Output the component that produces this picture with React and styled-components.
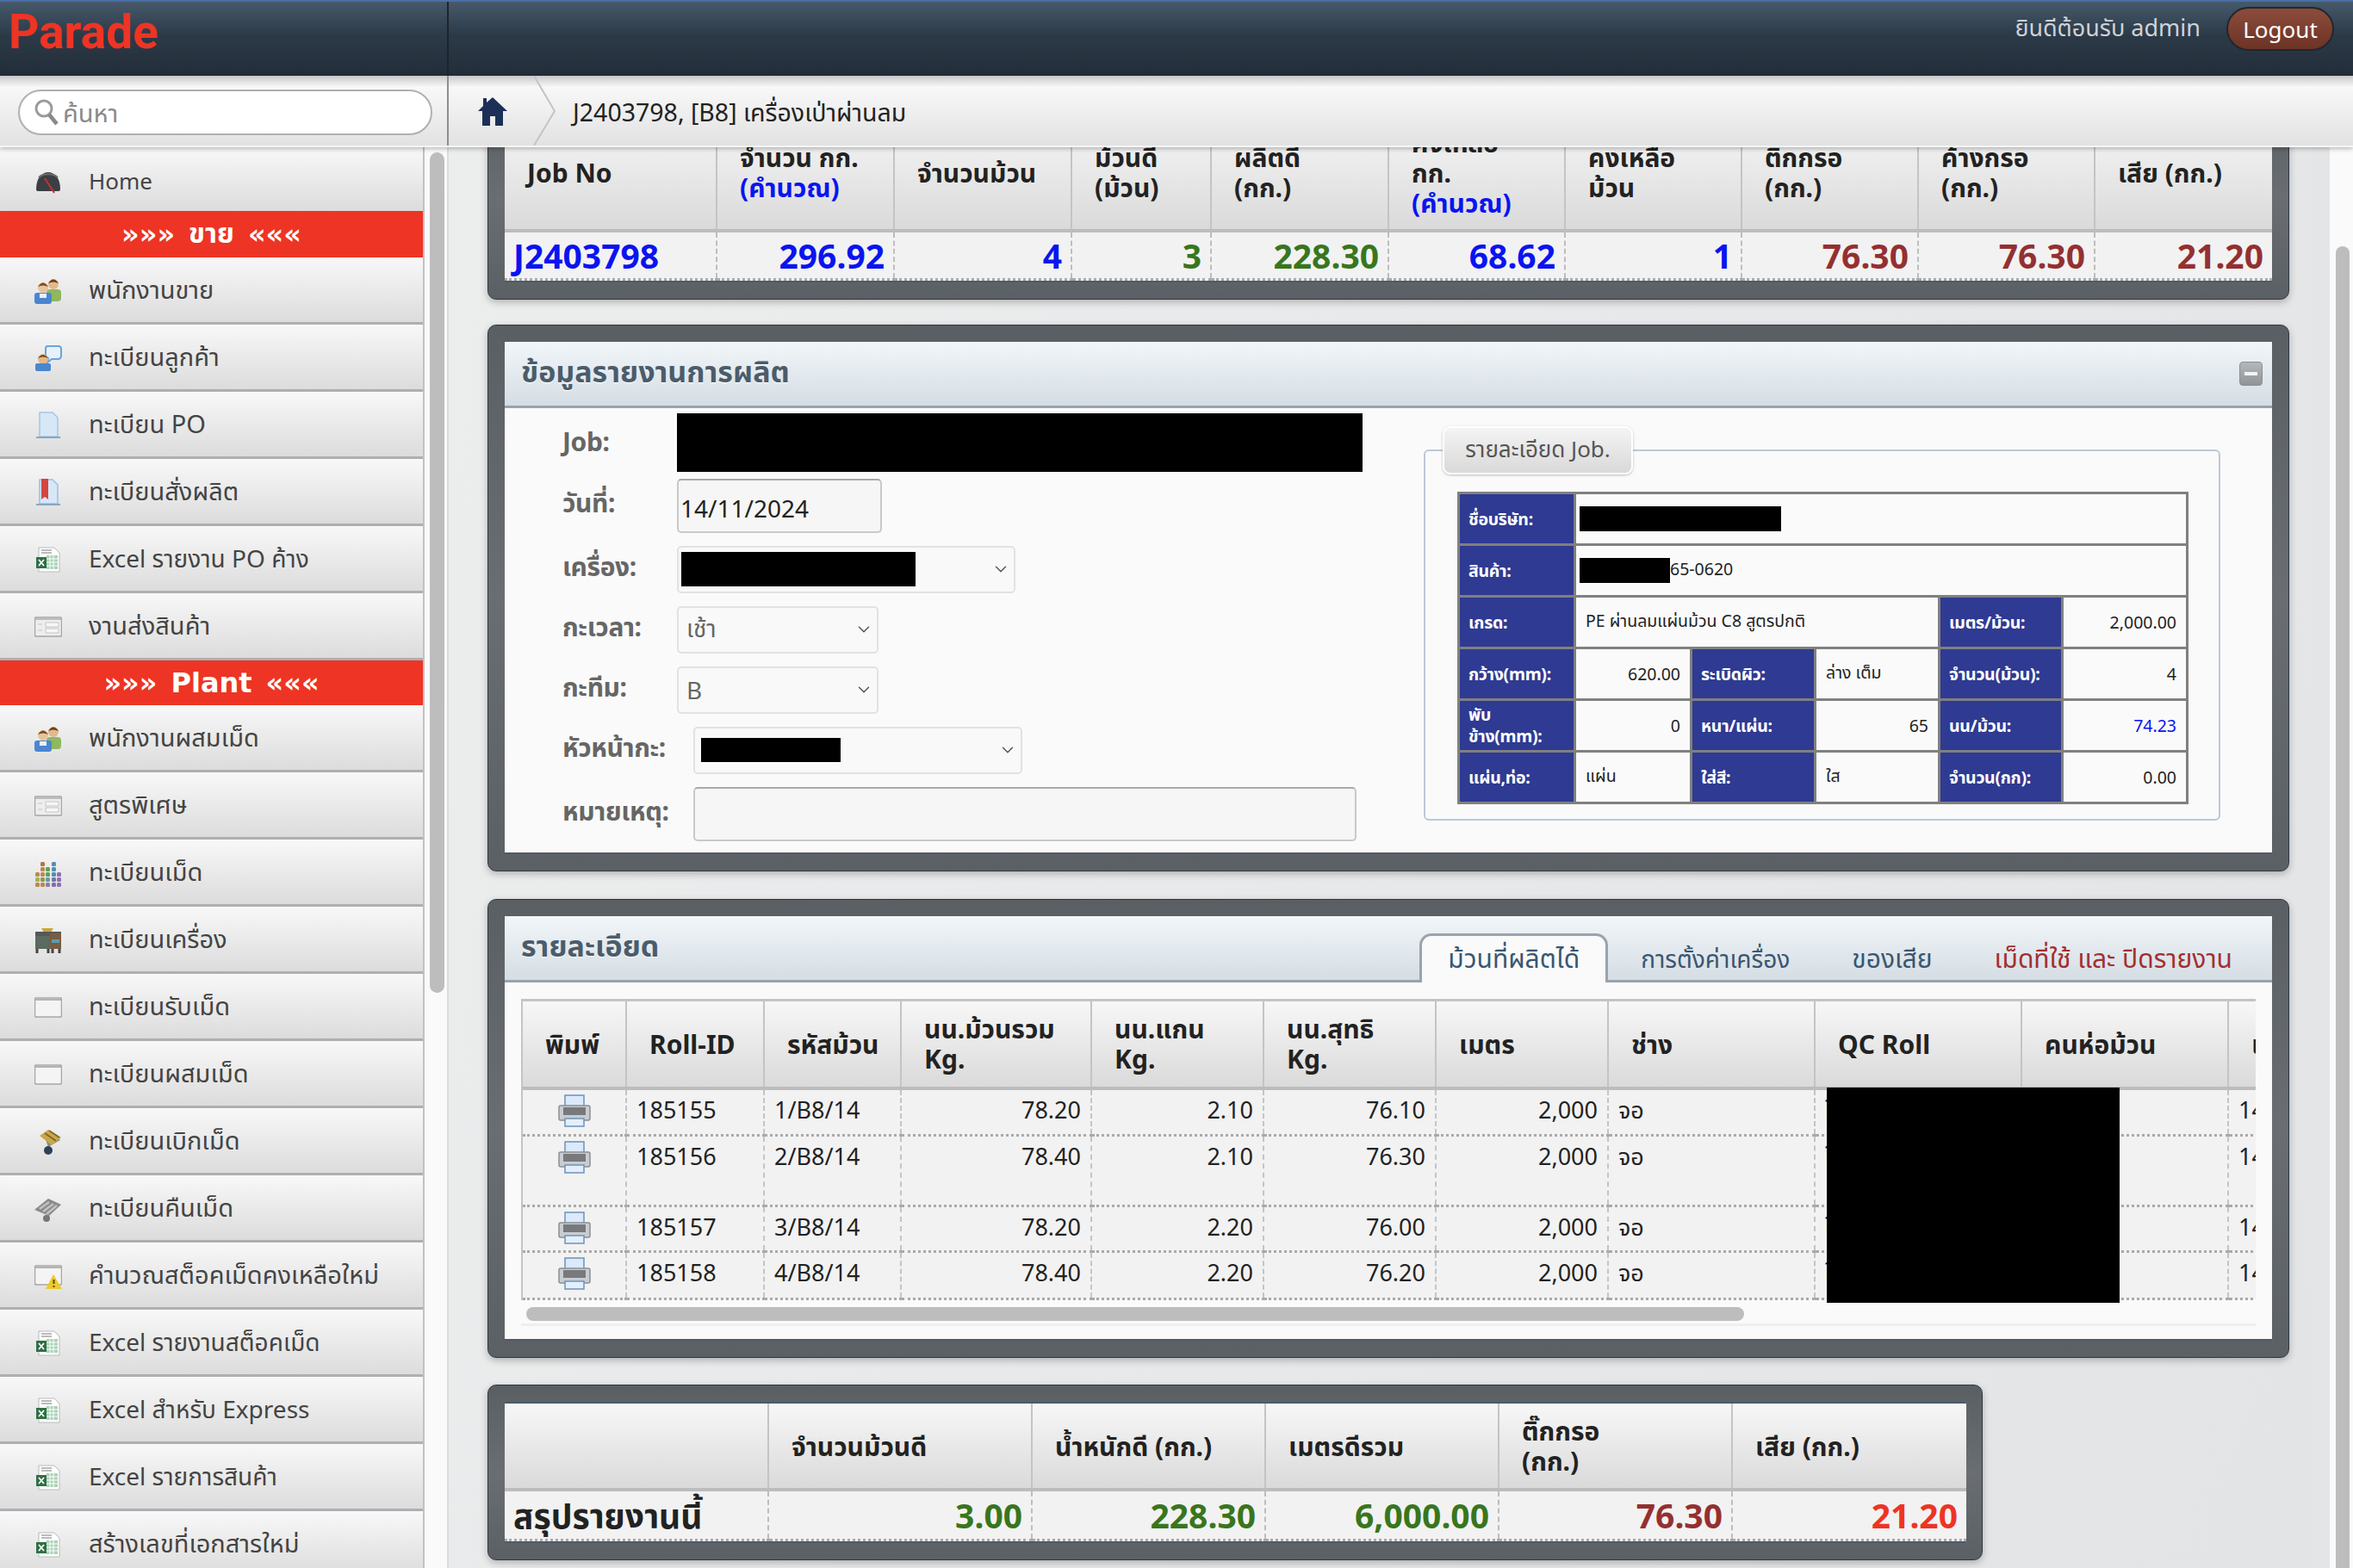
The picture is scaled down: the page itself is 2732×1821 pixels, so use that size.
import React from 'react';
import styled, { createGlobalStyle } from 'styled-components';
import { ChevronDown } from 'lucide-react';

const FONT = '"Noto Sans", "Noto Sans Thai", Tahoma, "DejaVu Sans", sans-serif';

const GlobalStyle = createGlobalStyle`
  html, body {
    margin: 0;
    padding: 0;
    background: #e5e6e8;
    font-family: ${FONT};
  }
  * { box-sizing: border-box; }
`;

const Page = styled.div`
  width: 2732px;
  height: 1821px;
  display: flex;
  flex-direction: column;
  overflow: hidden;
  color: #222;
`;

const TopBar = styled.header`
  height: 88px;
  flex: none;
  display: flex;
  align-items: flex-start;
  border-top: 2px solid #4a6fa8;
  background: linear-gradient(#46596b, #2c3a48 45%, #222d38);
`;

const Logo = styled.div`
  width: 521px;
  height: 86px;
  padding: 5px 0 0 10px;
  border-right: 2px solid #1c242c;
  color: #ee3424;
  font: bold 55px/60px "Roboto", sans-serif;
`;

const TopRight = styled.div`
  flex: 1;
  display: flex;
  align-items: center;
  justify-content: flex-end;
  gap: 30px;
  padding: 6px 22px 0 0;
`;

const Welcome = styled.span`
  color: #cfd3d6;
  font-size: 27px;
`;

const LogoutButton = styled.button`
  width: 125px;
  height: 51px;
  border: 2px solid #20272e;
  border-radius: 26px;
  background: linear-gradient(#8c4c3b, #6c3325);
  color: #fff;
  font: 26px ${FONT};
  padding: 0;
`;

const SubBar = styled.div`
  height: 83px;
  flex: none;
  display: flex;
  background: linear-gradient(#c8c8c8, #f8f8f8 16%, #e2e2e2);
  border-bottom: 2px solid #f5f5f5;
  box-shadow: 0 2px 5px rgba(0, 0, 0, 0.25);
  position: relative;
  z-index: 2;
`;

const SearchCell = styled.div`
  width: 521px;
  flex: none;
  padding: 16px 17px 0 21px;
  border-right: 2px solid #8b8f93;
`;

const SearchBox = styled.label`
  height: 53px;
  display: flex;
  align-items: center;
  gap: 2px;
  padding: 0 16px;
  border: 2px solid #b0b0b0;
  border-radius: 27px;
  background: #fff;
`;

const SearchInput = styled.input`
  flex: 1;
  min-width: 0;
  border: 0;
  outline: 0;
  background: none;
  font: 29px ${FONT};
  &::placeholder { color: #8a8a8a; opacity: 1; }
`;

const Crumbs = styled.nav`
  flex: 1;
  display: flex;
  align-items: center;
  padding: 0 0 0 33px;
  font-size: 28.5px;
  color: #222;
`;

const CrumbText = styled.span`
  margin-top: 7px;
`;

const CrumbArrow = styled.svg`
  width: 28px;
  height: 81px;
  margin: 0 19px 0 28px;
  flex: none;
`;

const Body = styled.div`
  flex: 1;
  min-height: 0;
  display: flex;
`;

const Side = styled.aside`
  width: 521px;
  flex: none;
  display: flex;
  overflow: hidden;
  background: #fafafa;
  border-right: 2px solid #dcdcdc;
`;

const SideList = styled.div`
  width: 493px;
  flex: none;
  border-right: 2px solid #bfc2c5;
`;

const SideThumb = styled.div`
  width: 17px;
  height: 976px;
  margin: 6px 0 0 6px;
  border-radius: 9px;
  background: #bdbdbd;
`;

const SideItem = styled.a`
  height: ${(p) => (p.$first ? 74 : 78)}px;
  display: flex;
  align-items: center;
  gap: 31px;
  padding: 3px 0 0 40px;
  background: linear-gradient(#f8f8f8, #dcdcdc);
  border-bottom: ${(p) => (p.$first ? 0 : '3px solid #adb0b3')};
  color: #444;
  font-size: ${(p) => p.$size || 29}px;
  white-space: nowrap;
`;

const SideSection = styled.div`
  height: ${(p) => (p.$tall ? 54 : 52)}px;
  display: flex;
  align-items: center;
  justify-content: center;
  gap: 16px;
  background: #ee3424;
  color: #fff;
  font: bold 32px "DejaVu Sans", ${FONT};
  white-space: pre;
`;

const IconBox = styled.svg`
  width: 32px;
  height: 32px;
  flex: none;
`;

const Main = styled.main`
  flex: 1;
  min-width: 0;
  display: flex;
  overflow: hidden;
`;

const MainScroll = styled.div`
  flex: 1;
  min-width: 0;
  padding: 0 0 0 45px;
  background: linear-gradient(115deg, #eceded, #e3e4e6);
`;

const ScrollRail = styled.div`
  width: 47px;
  flex: none;
  display: flex;
  background: linear-gradient(90deg, #e4e5e7 0 20px, #fafafa 20px);
`;

const RailThumb = styled.div`
  width: 16px;
  margin: 115px 0 0 27px;
  border-radius: 8px 8px 0 0;
  background: #bdbdbd;
`;

const Panel = styled.section`
  width: ${(p) => p.$width}px;
  margin-top: ${(p) => p.$top}px;
  padding: 19px;
  border: 1px solid #2c3843;
  border-radius: 10px;
  background: linear-gradient(#5a5f64, #6a6e72 50%, #5b6065);
  box-shadow: 0 3px 8px rgba(0, 0, 0, 0.25);
`;

const PanelBody = styled.div`
  background: #fafafa;
  border-top: ${(p) => (p.$bar ? '2px solid #4a5a68' : 0)};
  border-bottom: 2px solid #4f5b66;
`;

const PanelHead = styled.div`
  height: 77px;
  display: flex;
  align-items: flex-end;
  justify-content: space-between;
  padding-left: 19px;
  border-bottom: 3px solid #9aa3ad;
  background: linear-gradient(#f1f6f9, #d5dde4);
`;

const PanelTitle = styled.h2`
  align-self: center;
  margin: 0;
  color: #4b5c6b;
  font-size: 34px;
  font-weight: bold;
  text-shadow: 0 1px 0 #fff;
`;

const MinButton = styled.button`
  width: 27px;
  height: 28px;
  align-self: center;
  margin-right: 11px;
  display: flex;
  align-items: center;
  justify-content: center;
  padding: 0;
  border: 1px solid #8a8f94;
  border-radius: 4px;
  background: linear-gradient(#b4b8bb, #8f9498);
  &::before {
    content: '';
    width: 15px;
    height: 4px;
    background: #f4f4f4;
  }
`;

const Tabs = styled.div`
  display: flex;
  align-items: flex-end;
  height: 57px;
  margin-bottom: -3px;
  padding-right: 46px;
`;

const Tab = styled.div`
  height: ${(p) => (p.$active ? 57 : 54)}px;
  padding: 4px ${(p) => (p.$active ? 30 : 0)}px 0;
  margin-left: ${(p) => p.$gap || 0}px;
  font-size: ${(p) => p.$size || 30}px;
  line-height: 44px;
  white-space: nowrap;
  color: ${(p) => (p.$red ? '#a32f2f' : '#3a5670')};
  background: ${(p) => (p.$active ? '#fafafa' : 'none')};
  border: ${(p) => (p.$active ? '3px solid #9aa3ad' : 0)};
  border-bottom: 0;
  border-radius: 14px 14px 0 0;
`;

const DataTable = styled.table`
  width: ${(p) => p.$width}px;
  table-layout: fixed;
  border-collapse: collapse;
  font-size: 27px;
`;

const Col = styled.col`
  width: ${(p) => p.$w}px;
`;

const HeadCell = styled.th`
  height: ${(p) => p.$h}px;
  padding: 0 8px 0 ${(p) => p.$pad ?? 26}px;
  text-align: left;
  vertical-align: middle;
  font-size: 30px;
  font-weight: bold;
  line-height: 35px;
  color: #222;
  background: linear-gradient(#f7f7f7, #dadada);
  border-right: 2px solid #c4c4c4;
  border-bottom: 4px solid #bcbcbc;
  white-space: nowrap;
  &:last-child { border-right: 0; }
`;

const BlueNote = styled.span`
  color: #0a14f0;
`;

const ValueCell = styled.td`
  height: ${(p) => p.$h}px;
  padding: 0 10px;
  text-align: ${(p) => p.$align || 'right'};
  font-size: 39px;
  font-weight: bold;
  line-height: 1;
  color: ${(p) => p.$color};
  background: #f2f2f2;
  border-right: 2px dashed #bdbdbd;
  border-bottom: 3px dotted #aaa;
  white-space: nowrap;
  &:last-child { border-right: 0; }
`;

const RollCell = styled.td`
  height: ${(p) => p.$h}px;
  padding: 5px 11px 0;
  vertical-align: top;
  text-align: ${(p) => p.$align || 'left'};
  font-size: 27px;
  line-height: 36px;
  color: #222;
  background: #f2f2f2;
  border-right: 2px dashed #c4c4c4;
  border-bottom: 3px dotted #aaa;
  white-space: nowrap;
`;

const FormArea = styled.div`
  display: flex;
  height: 516px;
`;

const FormColumn = styled.div`
  width: 1040px;
  flex: none;
  display: flex;
  flex-direction: column;
  gap: 15px;
  padding: 6px 0 0 67px;
`;

const FormRow = styled.div`
  height: ${(p) => p.$h}px;
  margin-top: ${(p) => p.$mt || 0}px;
  display: flex;
  align-items: center;
`;

const FieldLabel = styled.label`
  width: ${(p) => p.$w}px;
  flex: none;
  color: #666;
  font-size: 30px;
  font-weight: bold;
  letter-spacing: -0.4px;
  white-space: nowrap;
  margin-top: -3px;
`;

const Redact = styled.span`
  display: inline-block;
  vertical-align: middle;
  flex: none;
  width: ${(p) => p.$w}px;
  height: ${(p) => p.$h}px;
  background: #000;
`;

const DateInput = styled.input`
  width: 238px;
  height: 63px;
  padding: 6px 2px 0;
  border: 2px solid #c9c9c9;
  border-top-color: #a9a9a9;
  border-radius: 5px;
  background: #f6f6f6;
  color: #222;
  font: 28px ${FONT};
`;

const SelectBox = styled.div`
  width: ${(p) => p.$w}px;
  height: 55px;
  display: flex;
  align-items: center;
  justify-content: space-between;
  padding: 0 4px 0 ${(p) => p.$pad}px;
  border: 2px solid #e2e2e2;
  border-radius: 5px;
  background: #f9f9f9;
  color: #666;
  font-size: 28px;
`;

const Note = styled.textarea`
  width: 770px;
  height: 63px;
  resize: none;
  border: 2px solid #c9c9c9;
  border-top-color: #a9a9a9;
  border-radius: 5px;
  background: #f6f6f6;
`;

const JobBox = styled.fieldset`
  position: relative;
  width: 925px;
  height: 431px;
  margin: 48px 0 0 27px;
  padding: 47px 0 0 37px;
  border: 2px solid #bcc8d6;
  border-radius: 6px;
`;

const JobLegend = styled.div`
  position: absolute;
  top: -29px;
  left: 20px;
  width: 221px;
  height: 56px;
  display: flex;
  align-items: center;
  justify-content: center;
  border: 2px solid #fff;
  border-radius: 9px;
  background: linear-gradient(#f4f4f4, #d9d9d9);
  box-shadow: 0 1px 3px rgba(0, 0, 0, 0.25);
  color: #555;
  font-size: 26px;
`;

const JobTable = styled.table`
  width: 846px;
  table-layout: fixed;
  border-collapse: collapse;
  font-size: 19.5px;
`;

const JobKey = styled.td`
  height: 60px;
  padding: 0 8px 0 10px;
  background: #2f3a92;
  color: #fff;
  font-weight: bold;
  line-height: 25px;
  letter-spacing: -0.3px;
  white-space: nowrap;
  border: 3px solid #808080;
`;

const JobVal = styled.td`
  padding: 0 ${(p) => (p.$tight ? 4 : 11)}px;
  text-align: ${(p) => p.$align || 'left'};
  color: ${(p) => p.$color || '#222'};
  background: #fafafa;
  border: 3px solid #808080;
  white-space: nowrap;
`;

const RollArea = styled.div`
  position: relative;
  padding: 19px 19px 15px 19px;
`;

const RollClip = styled.div`
  overflow: hidden;
  border-top: 3px solid #c4c4c4;
  border-left: 2px solid #c4c4c4;
`;

const RollScroll = styled.div`
  height: 22px;
  margin-top: 8px;
  border-bottom: 3px solid #efefef;
`;

const RollThumb = styled.div`
  width: 1414px;
  height: 16px;
  margin-left: 6px;
  border-radius: 8px;
  background: #bdbdbd;
`;

const RollMask = styled.div`
  position: absolute;
  left: 1535px;
  top: 122px;
  width: 340px;
  height: 250px;
  background: #000;
`;

const PrinterSvg = styled.svg`
  width: 38px;
  height: 38px;
  display: block;
  margin: 0 auto;
`;

const Shapes = {
  gauge: (
    <>
      <path d="M2 26 C2 12 9 6 16 6 C23 6 30 12 30 26 Q30 28 27 28 H5 Q2 28 2 26Z" fill="#3b3f45" />
      <path d="M5 12 C10 7 22 7 27 12" stroke="#6a6f75" strokeWidth="2" fill="none" />
      <path d="M12 13 L23 30" stroke="#c8342a" strokeWidth="2" />
    </>
  ),
  users: (
    <>
      <circle cx="22" cy="8" r="6" fill="#e2b98a" />
      <path d="M16 7 Q22 -2 28 7 Q22 4 16 7Z" fill="#6a3f20" />
      <rect x="14" y="14" width="17" height="14" rx="4" fill="#8fb85f" />
      <circle cx="10" cy="12" r="6" fill="#e8c49a" />
      <path d="M4 11 Q10 2 16 11 Q10 8 4 11Z" fill="#7a4a20" />
      <rect x="0" y="18" width="20" height="13" rx="3" fill="#4a86d0" />
      <rect x="6" y="19" width="8" height="5" fill="#e8f0fa" />
    </>
  ),
  talk: (
    <>
      <path d="M15 2 H28 Q31 2 31 6 V13 Q31 17 27 17 H20 L15 21 L16 16 Q13 15 13 12 V6 Q13 2 15 2Z" fill="#e6f1fb" stroke="#6aa3dc" strokeWidth="2" />
      <circle cx="10" cy="17" r="6" fill="#e2b98a" />
      <path d="M4 16 Q10 8 16 16 Q10 13 4 16Z" fill="#7a4a20" />
      <rect x="1" y="22" width="18" height="9" rx="2" fill="#4a86d0" />
    </>
  ),
  doc: (
    <>
      <path d="M6 1 H21 L27 7 V29 H6Z" fill="#d6e8f7" stroke="#a8c6e2" strokeWidth="1.5" />
      <path d="M2 30 H30" stroke="#8ba5bf" strokeWidth="2" />
    </>
  ),
  book: (
    <>
      <path d="M6 1 H21 L27 7 V29 H6Z" fill="#d6e8f7" stroke="#9dbfe0" strokeWidth="1.5" />
      <path d="M8 0 H16 V24 L12 21 L8 24Z" fill="#d8453e" />
      <path d="M2 30 H30" stroke="#8ba5bf" strokeWidth="2" />
    </>
  ),
  excel: (
    <>
      <path d="M5 2 H23 L29 8 V30 H5Z" fill="#fff" stroke="#b9b9b9" />
      <path d="M14 11 H27 V27 H14Z" fill="#a9d3b5" />
      <path d="M14 15 H27 M14 19 H27 M14 23 H27 M18 11 V27 M22 11 V27" stroke="#fff" />
      <path d="M8 5 H20 M8 8 H20" stroke="#bbb" strokeWidth="2" />
      <rect x="2" y="13" width="12" height="13" fill="#2e7044" />
      <path d="M5 16 L11 23 M11 16 L5 23" stroke="#fff" strokeWidth="1.8" />
    </>
  ),
  form: (
    <>
      <rect x="0.5" y="5" width="31" height="22" rx="1.5" fill="#eee" stroke="#a6a6a6" strokeWidth="1.5" />
      <path d="M1 7 H31" stroke="#bdbdbd" strokeWidth="2" />
      <path d="M4 13 H9 M4 20 H9 M13 11 H28 V16 H13Z M13 18 H28 V23 H13Z" stroke="#c4c4c4" fill="#f7f7f7" />
    </>
  ),
  win: (
    <>
      <rect x="0.5" y="5" width="31" height="22" rx="1.5" fill="#f4f4f4" stroke="#a6a6a6" strokeWidth="1.5" />
      <path d="M1 7 H31" stroke="#b4b4b4" strokeWidth="2" />
    </>
  ),
  warn: (
    <>
      <rect x="0.5" y="4" width="31" height="22" rx="1.5" fill="#f4f4f4" stroke="#a6a6a6" strokeWidth="1.5" />
      <path d="M1 6 H31" stroke="#b4b4b4" strokeWidth="2" />
      <path d="M22 14 L32 31 H13Z" fill="#edc92f" />
      <path d="M22.500 20 V25 M22.500 27 V29" stroke="#5c4a00" strokeWidth="2" />
    </>
  ),
  beads: (
    <>
      {[
        [1, 15, '#b98a4a'], [1, 21, '#a9b04a'], [1, 27, '#b98a4a'],
        [7, 3, '#b0773f'], [7, 9, '#b98a4a'], [7, 15, '#c08b52'], [7, 21, '#8b9a4a'], [7, 27, '#b98a4a'],
        [13, 9, '#5fa05f'], [13, 15, '#5fa05f'], [13, 21, '#5fa0a0'], [13, 27, '#8f7bb0'],
        [20, 3, '#4f8fb0'], [20, 9, '#4f8fb0'], [20, 15, '#4f8fb0'], [20, 21, '#7b6fb0'], [20, 27, '#7b6fb0'],
        [26, 15, '#8f6fb5'], [26, 21, '#8f6fb5'], [26, 27, '#8f6fb5'],
      ].map(([x, y, c]) => (
        <rect key={`${x}-${y}`} x={x} y={y} width="5" height="5" rx="1.500" fill={c} />
      ))}
    </>
  ),
  machine: (
    <>
      <path d="M8 2 H22 L17 10 H13Z" fill="#c9a63c" />
      <rect x="1" y="6" width="30" height="5" fill="#55585c" />
      <rect x="1" y="11" width="17" height="15" fill="#5c6a60" />
      <rect x="18" y="8" width="13" height="18" fill="#7a5c40" />
      <rect x="20" y="15" width="9" height="4" fill="#5f9ab0" />
      <path d="M3 26 V31 M16 26 V31 M21 26 V31 M29 26 V31" stroke="#444" strokeWidth="3" />
    </>
  ),
  cart: (
    <>
      <path d="M0 15 L12 11 L16 22 L30 14 L24 8 L12 11Z" fill="#8a8a8a" />
      <path d="M6 9 L16 2 L31 11 L20 20Z" fill="#c9a84a" />
      <path d="M12 6 L25 15 M17 3 L29 11" stroke="#7f6a2c" strokeWidth="2" />
      <circle cx="16" cy="26" r="5" fill="#2e4156" />
    </>
  ),
  cartGrey: (
    <>
      <path d="M0 17 L16 4 L31 11 L17 24Z" fill="#8a8a8a" />
      <path d="M6 16 L17 8 M10 19 L22 10 M14 22 L26 12" stroke="#c2c2c2" strokeWidth="2.500" />
      <circle cx="14" cy="27" r="4" fill="#777" />
    </>
  ),
};

const SideIcon = ({ name }) => <IconBox viewBox="0 0 32 32">{Shapes[name]}</IconBox>;

const Printer = () => (
  <PrinterSvg viewBox="0 0 38 38">
    <rect x="8" y="1" width="22" height="14" fill="#dbe9fb" stroke="#6e92b8" strokeWidth="1.5" />
    <rect x="1" y="13" width="36" height="17" rx="2" fill="#c9ccd0" stroke="#8b8f94" strokeWidth="1.5" />
    <rect x="6" y="15" width="26" height="9" fill="#77797c" />
    <rect x="8" y="28" width="22" height="9" fill="#e3effd" stroke="#6e92b8" strokeWidth="1.5" />
  </PrinterSvg>
);

const SECTION = 'section';
const menu = [
  { label: 'Home', icon: 'gauge', first: true, size: 26 },
  { type: SECTION, label: 'ขาย', tall: true },
  { label: 'พนักงานขาย', icon: 'users' },
  { label: 'ทะเบียนลูกค้า', icon: 'talk' },
  { label: 'ทะเบียน PO', icon: 'doc' },
  { label: 'ทะเบียนสั่งผลิต', icon: 'book' },
  { label: 'Excel รายงาน PO ค้าง', icon: 'excel', size: 28 },
  { label: 'งานส่งสินค้า', icon: 'form' },
  { type: SECTION, label: 'Plant' },
  { label: 'พนักงานผสมเม็ด', icon: 'users' },
  { label: 'สูตรพิเศษ', icon: 'form' },
  { label: 'ทะเบียนเม็ด', icon: 'beads' },
  { label: 'ทะเบียนเครื่อง', icon: 'machine' },
  { label: 'ทะเบียนรับเม็ด', icon: 'win' },
  { label: 'ทะเบียนผสมเม็ด', icon: 'win' },
  { label: 'ทะเบียนเบิกเม็ด', icon: 'cart' },
  { label: 'ทะเบียนคืนเม็ด', icon: 'cartGrey' },
  { label: 'คำนวณสต็อคเม็ดคงเหลือใหม่', icon: 'warn' },
  { label: 'Excel รายงานสต็อคเม็ด', icon: 'excel', size: 28 },
  { label: 'Excel สำหรับ Express', icon: 'excel', size: 28 },
  { label: 'Excel รายการสินค้า', icon: 'excel', size: 28 },
  { label: 'สร้างเลขที่เอกสารใหม่', icon: 'excel' },
];

const BLUE = '#0a14f0';
const GREEN = '#38761d';
const MAROON = '#943030';
const RED = '#ee3424';

const jobCols = [246, 206, 206, 162, 206, 205, 205, 205, 205, 206];
const jobRow = [
  { head: ['Job No'], value: 'J2403798', color: BLUE, align: 'left' },
  { head: ['จำนวน กก.'], note: '(คำนวณ)', value: '296.92', color: BLUE },
  { head: ['จำนวนม้วน'], value: '4', color: BLUE },
  { head: ['ม้วนดี', '(ม้วน)'], value: '3', color: GREEN },
  { head: ['ผลิตดี', '(กก.)'], value: '228.30', color: GREEN },
  { head: ['คงเหลือ', 'กก.'], note: '(คำนวณ)', value: '68.62', color: BLUE },
  { head: ['คงเหลือ', 'ม้วน'], value: '1', color: BLUE },
  { head: ['ติ๊กกรอ', '(กก.)'], value: '76.30', color: MAROON },
  { head: ['ค้างกรอ', '(กก.)'], value: '76.30', color: MAROON },
  { head: ['เสีย (กก.)'], value: '21.20', color: MAROON },
];

const rollCols = [120, 160, 159, 221, 200, 200, 200, 240, 240, 240, 120];
const rollHeads = [
  { lines: ['พิมพ์'] },
  { lines: ['Roll-ID'] },
  { lines: ['รหัสม้วน'] },
  { lines: ['นน.ม้วนรวม', 'Kg.'] },
  { lines: ['นน.แกน', 'Kg.'] },
  { lines: ['นน.สุทธิ', 'Kg.'] },
  { lines: ['เมตร'] },
  { lines: ['ช่าง'] },
  { lines: ['QC Roll'] },
  { lines: ['คนห่อม้วน'] },
  { lines: ['เวลาผลิต'] },
];
const rolls = [
  { h: 55, id: '185155', code: '1/B8/14', gross: '78.20', core: '2.10', net: '76.10' },
  { h: 82, id: '185156', code: '2/B8/14', gross: '78.40', core: '2.10', net: '76.30' },
  { h: 53, id: '185157', code: '3/B8/14', gross: '78.20', core: '2.20', net: '76.00' },
  { h: 55, id: '185158', code: '4/B8/14', gross: '78.40', core: '2.20', net: '76.20' },
];

const sumCols = [306, 306, 271, 271, 271, 272];
const sumRow = [
  { head: [''], value: 'สรุปรายงานนี้', color: '#222', align: 'left' },
  { head: ['จำนวนม้วนดี'], value: '3.00', color: GREEN },
  { head: ['น้ำหนักดี (กก.)'], value: '228.30', color: GREEN },
  { head: ['เมตรดีรวม'], value: '6,000.00', color: GREEN },
  { head: ['ติ๊กกรอ', '(กก.)'], value: '76.30', color: MAROON },
  { head: ['เสีย (กก.)'], value: '21.20', color: RED },
];

const Lines = ({ lines }) =>
  lines.map((line, i) => (
    <React.Fragment key={line}>
      {i > 0 && <br />}
      {line}
    </React.Fragment>
  ));

const SummaryTable = ({ cols, row, width, headHeight, valueHeight }) => (
  <DataTable $width={width}>
    <colgroup>
      {cols.map((w, i) => (
        <Col key={i} $w={w} />
      ))}
    </colgroup>
    <thead>
      <tr>
        {row.map((c, i) => (
          <HeadCell key={i} $h={headHeight}>
            <Lines lines={c.head} />
            {c.note && (
              <>
                <br />
                <BlueNote>{c.note}</BlueNote>
              </>
            )}
          </HeadCell>
        ))}
      </tr>
    </thead>
    <tbody>
      <tr>
        {row.map((c, i) => (
          <ValueCell key={i} $h={valueHeight} $color={c.color} $align={c.align}>
            {c.value}
          </ValueCell>
        ))}
      </tr>
    </tbody>
  </DataTable>
);

const JobDetail = () => (
  <JobTable>
    <colgroup>
      {[135, 135, 144, 144, 143, 145].map((w) => (
        <Col key={w} $w={w} />
      ))}
    </colgroup>
    <tbody>
      <tr>
        <JobKey>ชื่อบริษัท:</JobKey>
        <JobVal colSpan={5} $tight>
          <Redact $w={234} $h={29} />
        </JobVal>
      </tr>
      <tr>
        <JobKey>สินค้า:</JobKey>
        <JobVal colSpan={5} $tight>
          <Redact $w={105} $h={29} />
          65-0620
        </JobVal>
      </tr>
      <tr>
        <JobKey>เกรด:</JobKey>
        <JobVal colSpan={3}>PE ผ่านลมแผ่นม้วน C8 สูตรปกติ</JobVal>
        <JobKey>เมตร/ม้วน:</JobKey>
        <JobVal $align="right">2,000.00</JobVal>
      </tr>
      <tr>
        <JobKey>กว้าง(mm):</JobKey>
        <JobVal $align="right">620.00</JobVal>
        <JobKey>ระเบิดผิว:</JobKey>
        <JobVal>ล่าง เต็ม</JobVal>
        <JobKey>จำนวน(ม้วน):</JobKey>
        <JobVal $align="right">4</JobVal>
      </tr>
      <tr>
        <JobKey>
          พับ
          <br />
          ข้าง(mm):
        </JobKey>
        <JobVal $align="right">0</JobVal>
        <JobKey>หนา/แผ่น:</JobKey>
        <JobVal $align="right">65</JobVal>
        <JobKey>นน/ม้วน:</JobKey>
        <JobVal $align="right" $color={BLUE}>74.23</JobVal>
      </tr>
      <tr>
        <JobKey>แผ่น,ท่อ:</JobKey>
        <JobVal>แผ่น</JobVal>
        <JobKey>ใส่สี:</JobKey>
        <JobVal>ใส</JobVal>
        <JobKey>จำนวน(กก):</JobKey>
        <JobVal $align="right">0.00</JobVal>
      </tr>
    </tbody>
  </JobTable>
);

const Chevron = () => <ChevronDown size={22} strokeWidth={1.6} color="#555" />;

const ProductionForm = () => (
  <FormColumn>
    <FormRow $h={68}>
      <FieldLabel $w={133}>Job:</FieldLabel>
      <Redact $w={796} $h={68} />
    </FormRow>
    <FormRow $h={63} $mt={-7}>
      <FieldLabel $w={133}>วันที่:</FieldLabel>
      <DateInput defaultValue="14/11/2024" />
    </FormRow>
    <FormRow $h={55}>
      <FieldLabel $w={133}>เครื่อง:</FieldLabel>
      <SelectBox $w={393} $pad={3}>
        <Redact $w={272} $h={40} />
        <Chevron />
      </SelectBox>
    </FormRow>
    <FormRow $h={55}>
      <FieldLabel $w={133}>กะเวลา:</FieldLabel>
      <SelectBox $w={234} $pad={9}>
        เช้า
        <Chevron />
      </SelectBox>
    </FormRow>
    <FormRow $h={55}>
      <FieldLabel $w={133}>กะทีม:</FieldLabel>
      <SelectBox $w={234} $pad={9}>
        B
        <Chevron />
      </SelectBox>
    </FormRow>
    <FormRow $h={55}>
      <FieldLabel $w={152}>หัวหน้ากะ:</FieldLabel>
      <SelectBox $w={382} $pad={7}>
        <Redact $w={162} $h={28} />
        <Chevron />
      </SelectBox>
    </FormRow>
    <FormRow $h={63}>
      <FieldLabel $w={152}>หมายเหตุ:</FieldLabel>
      <Note />
    </FormRow>
  </FormColumn>
);

const RollTable = () => (
  <DataTable $width={2100}>
    <colgroup>
      {rollCols.map((w, i) => (
        <Col key={i} $w={w} />
      ))}
    </colgroup>
    <thead>
      <tr>
        {rollHeads.map((h) => (
          <HeadCell key={h.lines[0]} $h={101}>
            <Lines lines={h.lines} />
          </HeadCell>
        ))}
      </tr>
    </thead>
    <tbody>
      {rolls.map((r) => (
        <tr key={r.id}>
          <RollCell $h={r.h}>
            <Printer />
          </RollCell>
          <RollCell>{r.id}</RollCell>
          <RollCell>{r.code}</RollCell>
          <RollCell $align="right">{r.gross}</RollCell>
          <RollCell $align="right">{r.core}</RollCell>
          <RollCell $align="right">{r.net}</RollCell>
          <RollCell $align="right">2,000</RollCell>
          <RollCell>จอ</RollCell>
          <RollCell>ใ</RollCell>
          <RollCell />
          <RollCell>14/11/2024</RollCell>
        </tr>
      ))}
    </tbody>
  </DataTable>
);

const App = () => (
  <Page>
    <GlobalStyle />
    <TopBar>
      <Logo>Parade</Logo>
      <TopRight>
        <Welcome>ยินดีต้อนรับ admin</Welcome>
        <LogoutButton>Logout</LogoutButton>
      </TopRight>
    </TopBar>
    <SubBar>
      <SearchCell>
        <SearchBox>
          <svg width="30" height="34" viewBox="0 0 30 34">
            <circle cx="12" cy="12" r="9" fill="#fff" stroke="#9b9b9b" strokeWidth="3" />
            <path d="M18 19 L27 30" stroke="#8a8a8a" strokeWidth="4.500" />
          </svg>
          <SearchInput placeholder="ค้นหา" />
        </SearchBox>
      </SearchCell>
      <Crumbs>
        <svg width="36" height="36" viewBox="0 0 36 36">
          <path d="M18 2 L35 18 H30 V35 H21 V24 H15 V35 H6 V18 H1 L7 12 V3 H11 V8Z" fill="#1c2f57" />
        </svg>
        <CrumbArrow viewBox="0 0 28 81">
          <path d="M2 0 L26 41 L2 81" fill="none" stroke="#c4c4c4" strokeWidth="2" />
        </CrumbArrow>
        <CrumbText>J2403798, [B8] เครื่องเป่าผ่านลม</CrumbText>
      </Crumbs>
    </SubBar>
    <Body>
      <Side>
        <SideList>
          {menu.map((m) =>
            m.type === SECTION ? (
              <SideSection key={m.label} $tall={m.tall}>
                <span>»»»</span>
                <span>{m.label}</span>
                <span>«««</span>
              </SideSection>
            ) : (
              <SideItem key={m.label} $first={m.first} $size={m.size}>
                <SideIcon name={m.icon} />
                {m.label}
              </SideItem>
            ),
          )}
        </SideList>
        <SideThumb />
      </Side>
      <Main>
        <MainScroll>
          <Panel $width={2092} $top={-57}>
            <PanelBody>
              <SummaryTable cols={jobCols} row={jobRow} width={2052} headHeight={134} valueHeight={56} />
            </PanelBody>
          </Panel>
          <Panel $width={2092} $top={29}>
            <PanelHead>
              <PanelTitle>ข้อมูลรายงานการผลิต</PanelTitle>
              <MinButton aria-label="ย่อ" />
            </PanelHead>
            <PanelBody>
              <FormArea>
                <ProductionForm />
                <JobBox>
                  <JobLegend>รายละเอียด Job.</JobLegend>
                  <JobDetail />
                </JobBox>
              </FormArea>
            </PanelBody>
          </Panel>
          <Panel $width={2092} $top={32}>
            <PanelHead>
              <PanelTitle>รายละเอียด</PanelTitle>
              <Tabs>
                <Tab $active>ม้วนที่ผลิตได้</Tab>
                <Tab $gap={38} $size={28}>การตั้งค่าเครื่อง</Tab>
                <Tab $gap={72}>ของเสีย</Tab>
                <Tab $gap={72} $red>เม็ดที่ใช้ และ ปิดรายงาน</Tab>
              </Tabs>
            </PanelHead>
            <PanelBody>
              <RollArea>
                <RollClip>
                  <RollTable />
                </RollClip>
                <RollScroll>
                  <RollThumb />
                </RollScroll>
                <RollMask />
              </RollArea>
            </PanelBody>
          </Panel>
          <Panel $width={1736} $top={31}>
            <PanelBody $bar>
              <SummaryTable cols={sumCols} row={sumRow} width={1697} headHeight={100} valueHeight={58} />
            </PanelBody>
          </Panel>
        </MainScroll>
        <ScrollRail>
          <RailThumb />
        </ScrollRail>
      </Main>
    </Body>
  </Page>
);

export default App;
